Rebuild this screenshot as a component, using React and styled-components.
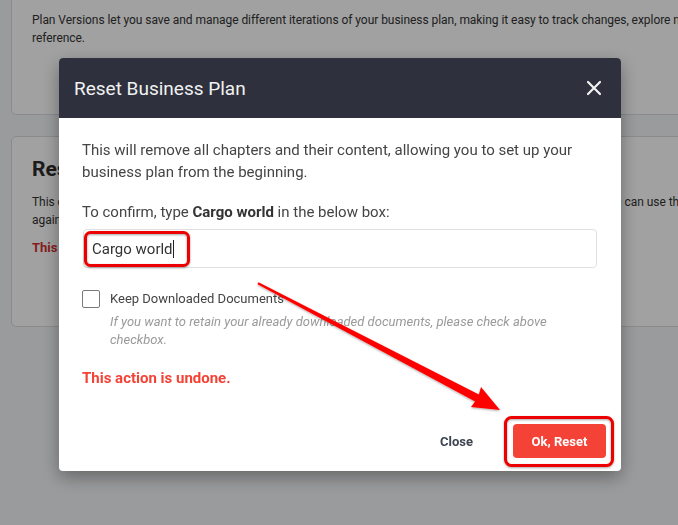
import styled, { createGlobalStyle } from "styled-components";

const GlobalStyle = createGlobalStyle`
  html, body {
    margin: 0;
    padding: 0;
    overflow: hidden;
    background: #f4f5f7;
    font-family: Roboto, "Liberation Sans", sans-serif;
  }
`;

export default function App() {
  return (
    <>
      <GlobalStyle />
      <Page>
        <Card $height="125px" $offset="-10px">
          <CardText>
            Plan Versions let you save and manage different iterations of your
            business plan, making it easy to track changes, explore new ideas
            and keep older ones for
            <br />
            reference.
          </CardText>
        </Card>

        <Card $height="191px">
          <CardTitle>Reset Business Plan</CardTitle>
          <CardText>
            This clears all chapters and content from your business plan so it
            can be rebuilt from scratch. If you need to, you can use this to
            start over
            <br />
            again with a clean plan.
          </CardText>
          <CardWarning>This action is undone.</CardWarning>
        </Card>
      </Page>

      <Overlay>
        <Modal>
          <Header>
            <Title>Reset Business Plan</Title>
            <CloseIcon aria-label="close">
              <svg width="16" height="16" viewBox="0 0 16 16">
                <path
                  d="M2 2 L14 14 M14 2 L2 14"
                  stroke="#f2f2f2"
                  strokeWidth="2.2"
                  strokeLinecap="round"
                />
              </svg>
            </CloseIcon>
          </Header>

          <Body>
            <Intro>
              This will remove all chapters and their content, allowing you to
              set up your business plan from the beginning.
            </Intro>
            <Confirm>
              To confirm, type <b>Cargo world</b> in the below box:
            </Confirm>
            <Input>
              Cargo world<Caret />
            </Input>

            <CheckRow>
              <Box />
              <CheckText>
                <CheckLabel>Keep Downloaded Documents</CheckLabel>
                <Hint>
                  If you want to retain your already downloaded documents,
                  please check above checkbox.
                </Hint>
              </CheckText>
            </CheckRow>

            <Warning>This action is undone.</Warning>
          </Body>

          <Footer>
            <Button type="button">Close</Button>
            <Button type="button" $primary>
              Ok, Reset
            </Button>
          </Footer>
        </Modal>

        {/* Screenshot annotations */}
        <Marks width="678" height="525" viewBox="0 0 678 525">
          <defs>
            <filter id="sh" x="-10%" y="-10%" width="120%" height="120%">
              <feDropShadow dx="0" dy="1" stdDeviation="1.2" floodOpacity="0.35" />
            </filter>
          </defs>
          <g filter="url(#sh)">
            <rect
              x="85.5"
              y="232.5"
              width="103"
              height="33"
              rx="5"
              fill="none"
              stroke="#ec0000"
              strokeWidth="3"
            />
            <rect
              x="505.5"
              y="417.5"
              width="107"
              height="48"
              rx="6"
              fill="none"
              stroke="#ec0000"
              strokeWidth="3"
            />
            <polygon
              points="258.5,282.3 478.9,394.5 481,387 500,410 471,407 475.1,401.5 257.5,284.2"
              fill="#ff0000"
            />
          </g>
        </Marks>
      </Overlay>
    </>
  );
}

const Page = styled.div`
  width: 740px;
  padding: 0 0 0 11px;
  display: flex;
  flex-direction: column;
  gap: 21px;
`;

const Card = styled.section`
  box-sizing: border-box;
  height: ${({ $height }) => $height};
  margin-top: ${({ $offset }) => $offset || "0"};
  padding: 20px 20px;
  background: #fff;
  border: 1px solid #dcdde1;
  border-radius: 5px;
`;

const CardTitle = styled.h2`
  margin: 0 0 12px;
  font-size: 21px;
  font-weight: 700;
  color: #2b2b2b;
`;

const CardText = styled.p`
  margin: 0;
  font-size: 12px;
  letter-spacing: -0.05px;
  line-height: 18px;
  white-space: nowrap;
  color: #333;
`;

const CardWarning = styled.p`
  margin: 11px 0 0;
  font-size: 13px;
  font-weight: 700;
  color: #d32f2f;
`;

const Overlay = styled.div`
  position: fixed;
  inset: 0;
  background: rgba(0, 0, 0, 0.37);
  display: flex;
  justify-content: center;
  align-items: flex-start;
`;

const Modal = styled.div`
  margin-top: 58px;
  margin-left: 2px;
  width: 562px;
  background: #fff;
  border-radius: 4px;
  overflow: hidden;
  box-shadow: 0 6px 18px rgba(0, 0, 0, 0.35);
`;

const Header = styled.div`
  height: 60px;
  background: #2e313d;
  display: flex;
  align-items: center;
  justify-content: space-between;
  padding: 0 17px 0 15px;
`;

const Title = styled.h3`
  margin: 0;
  font-size: 19px;
  font-weight: 400;
  color: #f1f1f1;
`;

const CloseIcon = styled.span`
  display: flex;
  width: 20px;
  height: 20px;
  align-items: center;
  justify-content: center;
`;

const Body = styled.div`
  padding: 21px 24px 0 23px;
  color: #454545;
`;

const Intro = styled.p`
  margin: 0;
  font-size: 15px;
  line-height: 22px;
`;

const Confirm = styled.p`
  margin: 18px 0 6px;
  font-size: 15px;
  line-height: 22px;

  b {
    color: #333;
  }
`;

const Input = styled.div`
  box-sizing: border-box;
  height: 39px;
  margin-left: 1px;
  border: 1px solid #e0e0e0;
  border-radius: 4px;
  padding: 0 8px;
  display: flex;
  align-items: center;
  font-size: 15px;
  color: #333;
`;

const Caret = styled.span`
  display: inline-block;
  width: 1px;
  height: 18px;
  background: #222;
`;

const CheckRow = styled.div`
  display: flex;
  gap: 10px;
  margin-top: 21px;
`;

const Box = styled.span`
  box-sizing: border-box;
  flex: none;
  width: 18px;
  height: 18px;
  margin-top: 1px;
  border: 1.5px solid #7a7a7a;
  border-radius: 2px;
`;

const CheckText = styled.div`
  display: flex;
  flex-direction: column;
`;

const CheckLabel = styled.span`
  font-size: 13px;
  line-height: 20px;
  color: #444;
`;

const Hint = styled.span`
  margin-top: 4px;
  font-size: 13px;
  line-height: 18px;
  font-style: italic;
  color: #9a9a9a;
`;

const Warning = styled.p`
  margin: 20px 0 0;
  font-size: 15px;
  font-weight: 700;
  color: #f44336;
`;

const Footer = styled.div`
  display: flex;
  justify-content: flex-end;
  align-items: center;
  gap: 24px;
  padding: 37px 15px 13px;
`;

const Button = styled.button`
  height: 34px;
  padding: 0 ${({ $primary }) => ($primary ? "18px" : "16px")};
  width: ${({ $primary }) => ($primary ? "93px" : "auto")};
  border: none;
  border-radius: 4px;
  background: ${({ $primary }) => ($primary ? "#f44336" : "transparent")};
  color: ${({ $primary }) => ($primary ? "#fff" : "#3d4350")};
  font-family: Roboto, "Liberation Sans", sans-serif;
  font-size: 13px;
  font-weight: 700;
  cursor: pointer;
`;

const Marks = styled.svg`
  position: absolute;
  left: 0;
  top: 0;
  pointer-events: none;
`;
